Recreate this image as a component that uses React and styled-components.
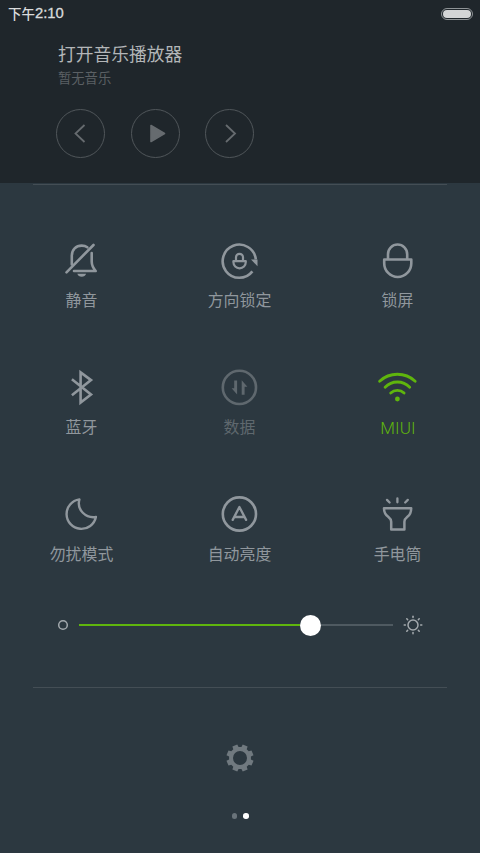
import React from "react";
import styled, { createGlobalStyle } from "styled-components";

const GlobalStyle = createGlobalStyle`
  * { box-sizing: border-box; }
  body { margin: 0; background: #2c3840; }
`;

const GREY = "#90979d";
const DIM = "#5f686e";
const GREEN = "#5fb50d";

const Screen = styled.main`
  width: 480px;
  height: 853px;
  display: flex;
  flex-direction: column;
  overflow: hidden;
  background: #2c3840;
  font-family: Roboto, "Noto Sans CJK SC", sans-serif;
`;

const TopPanel = styled.header`
  height: 183px;
  flex: none;
  background: #1f262b;
`;

const StatusBar = styled.div`
  height: 27px;
  padding: 0 7px 0 8px;
  display: flex;
  align-items: center;
  justify-content: space-between;
`;

const Clock = styled.span`
  color: #d9dbdc;
  font: 500 13.5px/26px "Noto Sans CJK SC", sans-serif;
  display: flex;
  white-space: nowrap;
`;

const Digits = styled.span`
  font: 400 14.8px/27px "Liberation Sans", sans-serif;
  -webkit-text-stroke: 0.3px currentColor;
`;

const Battery = styled.div`
  width: 32px;
  height: 12px;
  padding: 1px;
  border: 1.5px solid #8e9396;
  border-radius: 6px;

  &::after {
    content: "";
    display: block;
    height: 100%;
    border-radius: 4px;
    background: #d3d5d6;
  }
`;

const Player = styled.section`
  padding: 15px 0 0 58px;
`;

const Title = styled.div`
  color: #b3b6b8;
  font-size: 17.75px;
  line-height: 27px;
`;

const Subtitle = styled.div`
  color: #5b6064;
  font-size: 13.3px;
  line-height: 20px;
`;

const Controls = styled.div`
  display: flex;
  gap: 25.7px;
  margin: 20px 0 0 -2px;
`;

const RoundButton = styled.button`
  width: 49px;
  height: 49px;
  padding: 0;
  border: 1px solid #50565a;
  border-radius: 50%;
  background: none;
  color: #666b6f;

  svg { display: block; width: 47px; height: 47px; }
`;

const Divider = styled.hr`
  width: 414px;
  height: 1px;
  flex: none;
  margin: ${(p) => p.$top}px auto 0 33px;
  border: 0;
  background: #444e55;
`;

const Toggles = styled.section`
  display: grid;
  grid-template-columns: repeat(3, 158px);
  grid-auto-rows: 127px;
  margin: 54px 0 0 3px;
`;

const Toggle = styled.button`
  display: flex;
  flex-direction: column;
  align-items: center;
  padding: 0;
  border: 0;
  background: none;
  color: ${(p) => p.$color};
  font-family: inherit;
`;

const Icon = styled.svg`
  width: 44px;
  height: 44px;
  display: block;
  fill: none;
  stroke: currentColor;
  stroke-width: 2.6;
  stroke-linecap: round;
  stroke-linejoin: round;
`;

const Label = styled.span`
  margin: 6px 1px 0 0;
  font-size: 15.9px;
  line-height: 24px;
  white-space: nowrap;
`;

const LatinLabel = styled(Label)`
  font-size: 17px;
  font-weight: 300;
  letter-spacing: 0.1px;
  line-height: 25px;
  margin-right: 0;
`;

const Brightness = styled.section`
  display: flex;
  align-items: center;
  height: 24px;
  margin: -7px 0 0 57px;
  color: #a3a9ad;
`;

const LowIcon = styled.svg`
  width: 12px;
  height: 12px;
  margin-right: 10px;
`;

const SunIcon = styled.svg`
  width: 24px;
  height: 24px;
  margin-left: 8px;
`;

const Track = styled.div`
  display: flex;
  align-items: center;
  width: 314px;
`;

const Filled = styled.div`
  width: 221px;
  height: 2px;
  background: ${GREEN};
`;

const Thumb = styled.div`
  width: 21px;
  height: 21px;
  border-radius: 50%;
  background: #fff;
`;

const Remaining = styled.div`
  flex: 1;
  height: 2px;
  background: #4f5a61;
`;

const Footer = styled.footer`
  display: flex;
  flex-direction: column;
  align-items: center;
  padding-top: 55px;
`;

const Gear = styled.svg`
  width: 30px;
  height: 30px;
  display: block;
  fill: #70797f;
`;

const Pager = styled.div`
  display: flex;
  gap: 6px;
  margin-top: 40px;
`;

const Dot = styled.span`
  width: 5.5px;
  height: 5.5px;
  border-radius: 50%;
  background: ${(p) => (p.$active ? "#fff" : "#69737a")};
`;

const gearPath = (() => {
  const pts = [];
  for (let i = 0; i < 8; i++) {
    const mid = 22.5 + i * 45;
    [[-15, 11], [-11, 13.8], [11, 13.8], [15, 11]].forEach(([d, r]) => {
      const a = ((mid + d) * Math.PI) / 180;
      pts.push(`${(15 + r * Math.cos(a)).toFixed(2)} ${(15 + r * Math.sin(a)).toFixed(2)}`);
    });
  }
  return `M${pts.join("L")}ZM15 8a7 7 0 1 0 0 14a7 7 0 1 0 0-14Z`;
})();

const toggles = [
  {
    label: "静音",
    icon: (
      <>
        <path d="M6.5 33.3 33.5 6" />
        <path d="M11.8 25.5V16.8C11.8 10.5 16 6.6 21.7 6.6c2.3 0 4.2.6 5.6 1.7M31.7 14v8.5c0 4.5 1.4 6.5 4 9.5H14" />
        <path d="M17.3 34.8h8.8c-.6 2-2.2 3-4.4 3s-3.8-1-4.4-3Z" fill="currentColor" stroke="none" />
      </>
    ),
  },
  {
    label: "方向锁定",
    icon: (
      <>
        <path d="M34.4 32.4A16.6 16.6 0 1 1 37.8 20.4" strokeLinecap="butt" />
        <path d="M33 20.4h6.5v6.8Z" fill="currentColor" stroke="none" />
        <path d="M15.4 22.2h12.4v.9a6.2 6.2 0 0 1-12.4 0ZM18 22v-3.7a3.5 3.5 0 0 1 7 0V22" strokeWidth="2.2" />
      </>
    ),
  },
  {
    label: "锁屏",
    icon: <path d="M8.2 20.5h27.1v3.7a13.55 13.8 0 0 1-27.1 0ZM12 20v-4.8a9.6 9.7 0 0 1 19.2 0V20" />,
  },
  {
    label: "蓝牙",
    icon: <path d="M11.9 13.3 31 28.4 20.6 36.6V6.4L31 14.1 11.9 29.2" strokeLinejoin="miter" strokeLinecap="butt" />,
  },
  {
    label: "数据",
    color: DIM,
    icon: (
      <>
        <circle cx="21.4" cy="21.4" r="16.6" />
        <path d="M16.2 14.6h2.9v14L13.6 22.2h2.6ZM23.7 28.7V14.3l5.7 6.4h-2.8v8Z" fill="currentColor" stroke="none" />
      </>
    ),
  },
  {
    label: "MIUI",
    color: GREEN,
    latin: true,
    icon: (
      <>
        <path d="M3.6 15.2a26.3 26.3 0 0 1 35.6 0M9.1 21.2a17.2 17.2 0 0 1 24.6 0M14.7 27a9.7 9.7 0 0 1 13.4 0" strokeWidth="2.8" />
        <circle cx="21.4" cy="33" r="2.4" fill="currentColor" stroke="none" />
      </>
    ),
  },
  {
    label: "勿扰模式",
    icon: <path d="M19.4 6.4A14.8 14.8 0 1 0 35.9 24C26 25.6 16.4 16.9 19.4 6.4Z" strokeWidth="2.4" />,
  },
  {
    label: "自动亮度",
    icon: (
      <>
        <circle cx="21.4" cy="21" r="16.6" />
        <path d="M14.7 26.9 21.4 14l6.7 12.9M17.3 24h8.3" strokeWidth="2.3" />
      </>
    ),
  },
  {
    label: "手电筒",
    icon: (
      <>
        <path d="M8 15.2h27.2c0 4-1.2 6.6-3.8 8.6-2 1.6-3 2.7-3 5v7.8H15.2v-7.8c0-2.3-1-3.4-3-5C9.5 21.8 8 19.2 8 15.2Z" strokeWidth="2.5" />
        <path d="M21.4 5.5v3.8M11 6.9l2.6 2.6M31.8 6.9l-2.6 2.6" strokeWidth="2.3" />
      </>
    ),
  },
];

const rays = [0, 45, 90, 135, 180, 225, 270, 315];

export default function App() {
  return (
    <Screen>
      <GlobalStyle />
      <TopPanel>
        <StatusBar>
          <Clock>下午<Digits>2:10</Digits></Clock>
          <Battery />
        </StatusBar>
        <Player>
          <Title>打开音乐播放器</Title>
          <Subtitle>暂无音乐</Subtitle>
          <Controls>
            <RoundButton aria-label="上一首">
              <svg viewBox="0 0 47 47"><path d="M27.5 15 18.5 23.5 27.5 32" fill="none" stroke="currentColor" strokeWidth="1.8" /></svg>
            </RoundButton>
            <RoundButton aria-label="播放">
              <svg viewBox="0 0 47 47"><path d="M19 15.5 32.5 23.5 19 31.5Z" fill="currentColor" stroke="currentColor" strokeWidth="1.6" strokeLinejoin="round" /></svg>
            </RoundButton>
            <RoundButton aria-label="下一首">
              <svg viewBox="0 0 47 47"><path d="M20 15 29 23.5 20 32" fill="none" stroke="currentColor" strokeWidth="1.8" /></svg>
            </RoundButton>
          </Controls>
        </Player>
      </TopPanel>
      <Divider $top={1} />
      <Toggles>
        {toggles.map((t) => {
          const Text = t.latin ? LatinLabel : Label;
          return (
            <Toggle key={t.label} $color={t.color || GREY}>
              <Icon viewBox="0 0 44 44">{t.icon}</Icon>
              <Text>{t.label}</Text>
            </Toggle>
          );
        })}
      </Toggles>
      <Brightness>
        <LowIcon viewBox="0 0 12 12">
          <circle cx="6" cy="6" r="4.3" fill="none" stroke="currentColor" strokeWidth="1.5" />
        </LowIcon>
        <Track>
          <Filled />
          <Thumb />
          <Remaining />
        </Track>
        <SunIcon viewBox="0 0 24 24" fill="none" stroke="currentColor" strokeWidth="1.5">
          <circle cx="12" cy="12" r="5" />
          {rays.map((a) => (
            <path key={a} d="M12 3.2v1.2" strokeLinecap="round" transform={`rotate(${a} 12 12)`} />
          ))}
        </SunIcon>
      </Brightness>
      <Divider $top={50} />
      <Footer>
        <Gear viewBox="0 0 30 30"><path d={gearPath} fillRule="evenodd" /></Gear>
        <Pager>
          <Dot />
          <Dot $active />
        </Pager>
      </Footer>
    </Screen>
  );
}
